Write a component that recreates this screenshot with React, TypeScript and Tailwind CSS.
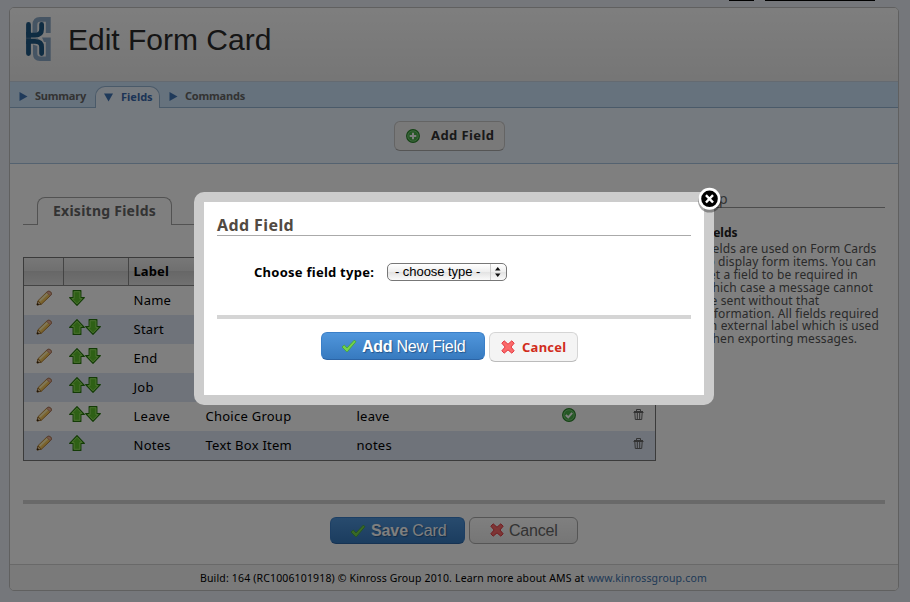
import type { ReactNode } from "react";

const sans = "font-['Noto_Sans','Open_Sans',sans-serif]";
const helv = "font-['Liberation_Sans',Arial,sans-serif]";

function Logo() {
  return (
    <svg width="26" height="46" viewBox="0 0 26 46">
      <g fill="#8ba8c6">
        <path d="M25.700 0V16H20.800V4.800H15Q12.300 4.800 12.300 8V15.500L7.500 17V8Q7.500 0 15 0Z" />
        <path d="M17 20.500H25.700V44H15Q8 44 8 37V27.500L12.300 29V36.500Q12.300 39.500 15 39.500H20.800V25H19Z" />
      </g>
      <g fill="none" stroke="#1f5885" strokeWidth="4.800" strokeLinecap="round">
        <path d="M3.500 7.500V16Q3.500 18.200 6 18.200H10Q16.600 18.200 16.600 12V7.500" />
        <path d="M3.500 36.500V26Q3.500 24.300 6 24.300H10Q16.600 24.300 16.600 30V36.500" />
      </g>
      <path d="M1.100 15H6V27H1.100Z" fill="#1f5885" />
      <path d="M1 21.200H13" stroke="#6d8ba8" strokeWidth=".7" />
    </svg>
  );
}

function Pencil() {
  return (
    <svg width="16" height="16" viewBox="0 0 16 16">
      <path d="M1 15L2 10.700L11.300 1.600Q13 .4 14.700 2Q16.200 3.700 14.900 5.200L5.400 14.200Z" fill="#f6c95c" stroke="#a8732a" strokeWidth=".9" strokeLinejoin="round" />
      <path d="M3.600 11L11.500 3.500" stroke="#ffeeb0" strokeWidth="1.800" />
      <path d="M10.700 2.300L14.200 5.800L15 5Q16 3.500 14.600 2Q13 .6 11.500 1.600Z" fill="#eeb193" stroke="#a0706b" strokeWidth=".7" />
      <path d="M1 15L2 11L5.200 14.100Z" fill="#efd1a0" stroke="#8c6225" strokeWidth=".7" />
      <path d="M.8 15.300L1.400 13L3.200 14.600Z" fill="#302010" />
    </svg>
  );
}

function Arrow({ down }: { down?: boolean }) {
  return (
    <svg width="16" height="16" viewBox="0 0 16 16" className={down ? "rotate-180" : ""}>
      <path d="M8 .6L15.400 8.400H11.900V15.400H4.100V8.400H.6Z" fill="#5dc02a" stroke="#27770d" strokeWidth="1.100" strokeLinejoin="round" />
      <path d="M8 2.200L13 7.400H10.900V14.300H5.100V7.400H3Z" fill="none" stroke="#9be565" strokeWidth=".9" />
    </svg>
  );
}

function Check() {
  return (
    <svg width="16" height="14" viewBox="0 0 16 14">
      <path d="M1 8L3.300 6L6 9L13.200 1.200L15 2.600L6.500 12.600H5.500Z" fill="#74d34b" stroke="#43a532" strokeWidth=".8" strokeLinejoin="round" />
    </svg>
  );
}

function Cross() {
  return (
    <svg width="14" height="14" viewBox="0 0 14 14">
      <path d="M.8 3.200L3.200 .8L7 4.200L10.800 .8L13.200 3.200L10 7L13.200 10.800L10.800 13.200L7 9.900L3.200 13.200L.8 10.800L4.100 7Z" fill="#fb6a6a" stroke="#e02f39" strokeWidth=".9" strokeLinejoin="round" />
    </svg>
  );
}

function Badge({ kind }: { kind: "plus" | "check" }) {
  return (
    <svg width="14" height="14" viewBox="0 0 14 14">
      <circle cx="7" cy="7" r="6.400" fill="#4bb04b" stroke="#2b852b" strokeWidth="1.100" />
      <circle cx="7" cy="7" r="5.200" fill="none" stroke="#8bd38b" strokeWidth=".7" />
      {kind === "plus" ? (
        <path d="M7 3.700V10.300M3.700 7H10.300" stroke="#fff" strokeWidth="2" />
      ) : (
        <path d="M3.800 7L6.200 9.300L10.200 4.800" stroke="#fff" strokeWidth="1.900" fill="none" />
      )}
    </svg>
  );
}

function Trash() {
  return (
    <svg width="11" height="11" viewBox="0 0 11 11" fill="none" stroke="#666" strokeWidth="1">
      <path d="M1 2.500H10M3.500 2V.5H7.500V2M1.800 3.500L2.300 10.500H8.700L9.200 3.500M4.300 4V10M6.700 4V10" />
      <path d="M.5 3.500H10.500" />
    </svg>
  );
}

function Triangle({ down }: { down?: boolean }) {
  return (
    <svg width="9" height="9" viewBox="0 0 9 9">
      <path d={down ? "M0 .5H9L4.500 8.500Z" : "M.5 0V9L8.500 4.500Z"} fill="#3f74b5" />
    </svg>
  );
}

function FieldRow({ label, type, name, up, down, required, alt }: {
  label: string; type?: string; name?: string; up?: boolean; down?: boolean; required?: boolean; alt?: boolean;
}) {
  const cell = "text-[13px] leading-[29px] tracking-[0.25px] text-black whitespace-nowrap";
  return (
    <div className={`flex h-[29px] items-center ${alt ? "bg-[#dfe7f4]" : ""}`}>
      <div className="flex w-[44px] pb-[5px] pl-3"><Pencil /></div>
      <div className="flex w-[65.5px] pb-[6px] pl-px">{up && <Arrow />}{down && <Arrow down />}</div>
      <div className={`w-[72px] ${cell}`}>{label}</div>
      <div className={`w-[151px] ${cell}`}>{type}</div>
      <div className={`w-[205.5px] ${cell}`}>{name}</div>
      <div className="w-[71px] pb-[4px]">{required && <Badge kind="check" />}</div>
      <div className="pb-[5px]"><Trash /></div>
    </div>
  );
}

function BlueButton({ className, children }: { className: string; children: ReactNode }) {
  return (
    <button className={`flex items-center rounded-md border border-[#3a7fc8] border-b-[#2c64a5] bg-linear-to-b from-[#5096dc] to-[#377abf] text-[16px] text-white [text-shadow:1px_1px_1px_#24568c] ${helv} ${className}`}>
      {children}
    </button>
  );
}

const helpLines = [
  "Fields are used on Form Cards",
  "to display form items. You can",
  "set a field to be required in",
  "which case a message cannot",
  "be sent without that",
  "information. All fields required",
  "an external label which is used",
  "when exporting messages.",
];

export default function App() {
  return (
    <div className={`relative h-[602px] w-[910px] overflow-hidden bg-[#ebeff6] ${sans}`}>
      <div className="flex h-[7px] items-start gap-[11px] pl-[729px]">
        <div className="h-px w-[25px] bg-black" />
        <div className="h-px w-[110px] bg-black" />
      </div>

      <div className="ml-[9px] flex h-[584px] w-[890px] flex-col overflow-hidden rounded-[5px] border border-[#c0c0c0] bg-white">
        <header className="flex h-[73px] shrink-0 bg-linear-to-b from-[#fdfdfd] to-[#ececec] pl-[15px]">
          <div className="pt-[9px]"><Logo /></div>
          <h1 className={`ml-[17px] pt-[13px] text-[30px] leading-[38px] text-[#2b2b2b] ${helv}`}>Edit Form Card</h1>
        </header>

        <nav className="flex h-[27px] shrink-0 border-y border-t-[#c9d5e2] border-b-[#94b4d3] bg-[#cde4fa] text-[11px] font-bold text-[#666]">
          <div className="flex w-[85px] items-center gap-[7px] pt-[4px] pl-[9px] tracking-[-0.2px]"><Triangle />Summary</div>
          <div className="-mb-px mt-[4px] flex w-[65px] items-center gap-[8px] rounded-t-[10px] border border-b-0 border-[#94b4d3] bg-[#ebf4fe] pl-[8px] text-[#3868ad]"><Triangle down />Fields</div>
          <div className="flex items-center gap-[7px] pt-[4px] pl-[9px] tracking-[-0.2px]"><Triangle />Commands</div>
        </nav>

        <div className="flex h-[56px] shrink-0 justify-center border-b border-[#a8c4e0] bg-[#ebf4fe] pt-[13px] pr-[9px]">
          <button className="flex h-[30px] w-[111px] items-center gap-[11px] rounded-md border border-[#c9c9c9] border-b-[#aaa] bg-[#f3f3f3] pl-[11px] text-[13px] font-bold tracking-[0.4px] whitespace-nowrap text-[#333]">
            <Badge kind="plus" />Add Field
          </button>
        </div>

        <main className="flex h-[336px] shrink-0 pl-[13px]">
          <section className="w-[633px]">
            <div className="flex h-[61px] items-end">
              <div className="h-px w-[14px] bg-[#a5a5a5]" />
              <div className="h-[28px] w-[135px] rounded-t-lg border border-b-0 border-[#a5a5a5] text-center text-[14px] leading-[26px] font-bold tracking-[0.25px] text-[#666]">Exisitng Fields</div>
              <div className="h-px flex-1 bg-[#a5a5a5]" />
            </div>
            <div className="mt-[32px] border border-[#777]">
              <div className="flex h-[28px] border-b border-[#888] bg-[linear-gradient(#efefef,#dedede_50%,#cfcfcf_50%,#e2e2e2)] text-[13px] leading-[27px] font-bold text-black">
                <div className="w-[40px] border-r border-[#888]" />
                <div className="w-[65px] border-r border-[#888]" />
                <div className="pl-[4.5px] tracking-[0.1px]">Label</div>
              </div>
              <FieldRow label="Name" down />
              <FieldRow label="Start" up down alt />
              <FieldRow label="End" up down />
              <FieldRow label="Job" up down alt />
              <FieldRow label="Leave" type="Choice Group" name="leave" up down required />
              <FieldRow label="Notes" type="Text Box Item" name="notes" up alt />
            </div>
          </section>
          <aside className="ml-[40px] w-[189px] pt-[26px]">
            <h2 className="h-[18px] border-b border-[#999] pl-px text-[14px] leading-[17px] text-[#666]">Help</h2>
            <h3 className="pt-[18px] pl-[7px] text-[12px] leading-[14px] font-bold text-[#222]">Fields</h3>
            <div className="pt-[3px] pl-[7px] text-[12px] leading-[12.9px] tracking-[0.12px] whitespace-nowrap text-[#555]">
              {helpLines.map((l) => <p key={l}>{l}</p>)}
            </div>
          </aside>
        </main>

        <div className="mx-[13px] h-[4px] shrink-0 bg-[#d3d3d3]" />
        <div className="flex h-[60px] shrink-0 gap-[4px] pt-[13px] pl-[320px]">
          <BlueButton className="h-[27px] w-[135px] gap-[5px] pl-[19px] tracking-[-0.1px]"><Check /><span className="whitespace-nowrap"><b>Save</b> Card</span></BlueButton>
          <button className={`flex h-[27px] w-[109px] items-center gap-[5px] rounded-md border border-[#aaa] bg-linear-to-b from-white to-[#ececec] pl-[20px] text-[16px] tracking-[-0.2px] text-[#666] ${helv}`}><span className="pb-[2px]"><Cross /></span>Cancel</button>
        </div>
        <footer className="min-h-0 flex-1 border-t border-[#d2d2d2] bg-[#f4f4f4] pl-[190px] text-[10.5px] leading-[26px] tracking-[0.155px] whitespace-nowrap text-black">
          Build: 164 (RC1006101918) © Kinross Group 2010. Learn more about AMS at <a className="text-[#3c72ad]">www.kinrossgroup.com</a>
        </footer>
      </div>

      <div className="absolute inset-0 bg-black/50" />

      <div className="absolute top-[192px] left-[194px] h-[213px] w-[520px] rounded-[10px] bg-[#ccc] p-[10px]">
        <div className="h-[193px] bg-white px-[13px] pt-[10px]">
          <h2 className="h-[24px] border-b border-[#aaa] text-[16px] leading-[26px] font-bold tracking-[0.4px] text-[#524a42]">Add Field</h2>
          <div className="flex h-[79px] pt-[27px] pl-[37px]">
            <label className="w-[133px] text-[13px] leading-[18px] font-bold tracking-[0.25px] whitespace-nowrap text-black">Choose field type:</label>
            <div className={`flex h-[18px] w-[120px] items-center rounded-[5px] border border-[#777] bg-[linear-gradient(#fff,#eee_50%,#e2e2e2_50%,#fafafa)] pl-[7px] text-[13px] tracking-[-0.05px] text-black ${helv}`}>
              <span className="w-[95px] whitespace-nowrap">- choose type -</span>
              <svg width="16" height="16" viewBox="0 0 16 16"><path d="M.5 0V16" stroke="#ccc" /><path d="M5 6.500H10.500L7.750 3ZM5 9.500H10.500L7.750 13Z" fill="#111" /></svg>
            </div>
          </div>
          <div className="h-[4px] bg-[#d5d5d5]" />
          <div className="flex gap-[4px] pt-[13px] pl-[104px]">
            <BlueButton className="h-[28px] w-[164px] gap-[5px] pl-[19px] tracking-[-0.25px]"><Check /><span className="pt-[2px] whitespace-nowrap"><b>Add</b> New Field</span></BlueButton>
            <button className="flex h-[30px] w-[89px] items-center gap-[7px] rounded-md border border-[#d5d5d5] border-b-[#bbb] bg-[#f4f4f4] pl-[11px] text-[13px] font-bold tracking-[0.25px] text-[#d12c1c]"><Cross /><span className="pt-[2px]">Cancel</span></button>
          </div>
        </div>
      </div>

      <svg className="absolute top-[185px] left-[695px]" width="30" height="32" viewBox="0 0 30 32">
        <circle cx="14.500" cy="16" r="11.500" fill="#000" opacity=".35" />
        <circle cx="14.500" cy="13.800" r="11" fill="#fff" />
        <circle cx="14.500" cy="13.800" r="8.300" fill="#000" />
        <path d="M11.800 11L17.200 16.600M17.200 11L11.800 16.600" stroke="#fff" strokeWidth="2.400" strokeLinecap="square" />
      </svg>
    </div>
  );
}
